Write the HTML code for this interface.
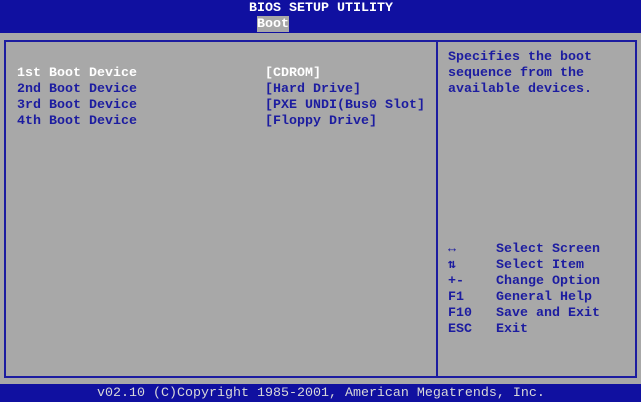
<!DOCTYPE html><html><head><style>
body{margin:0;width:641px;height:402px;background:#a8a8a8;position:relative;overflow:hidden;font-family:"Liberation Mono",monospace;font-weight:bold;font-size:13.33px;line-height:16px}
.t{position:absolute;white-space:pre}
.w{color:#fff}.b{color:#1c1ca0}
</style></head><body>
<div style="position:absolute;left:0;top:0;width:641px;height:33px;background:#1010a0"></div>
<div class="t w" style="left:249px;top:1px">BIOS SETUP UTILITY</div>
<div style="position:absolute;left:257px;top:16px;width:32px;height:16px;background:#a8a8a8"></div>
<div class="t w" style="left:257px;top:17px">Boot</div>
<div style="position:absolute;left:4px;top:40px;width:629px;height:334px;border:2px solid #1c1ca0"></div>
<div style="position:absolute;left:436px;top:40px;width:2px;height:336px;background:#1c1ca0"></div>
<div class="t w" style="left:17px;top:66px">1st Boot Device</div>
<div class="t b" style="left:17px;top:82px">2nd Boot Device
3rd Boot Device
4th Boot Device</div>
<div class="t w" style="left:265px;top:66px">[CDROM]</div>
<div class="t b" style="left:265px;top:82px">[Hard Drive]
[PXE UNDI(Bus0 Slot]
[Floppy Drive]</div>
<div class="t b" style="left:448px;top:50px">Specifies the boot
sequence from the
available devices.</div>
<div class="t b" style="left:448px;top:242px">↔
⇅
+-
F1
F10
ESC</div>
<div class="t b" style="left:496px;top:242px">Select Screen
Select Item
Change Option
General Help
Save and Exit
Exit</div>
<div style="position:absolute;left:0;top:384px;width:641px;height:18px;background:#1010a0"></div>
<div class="t" style="left:97px;top:386px;color:#d8d8d8;font-weight:normal">v02.10 (C)Copyright 1985-2001, American Megatrends, Inc.</div>
</body></html>
